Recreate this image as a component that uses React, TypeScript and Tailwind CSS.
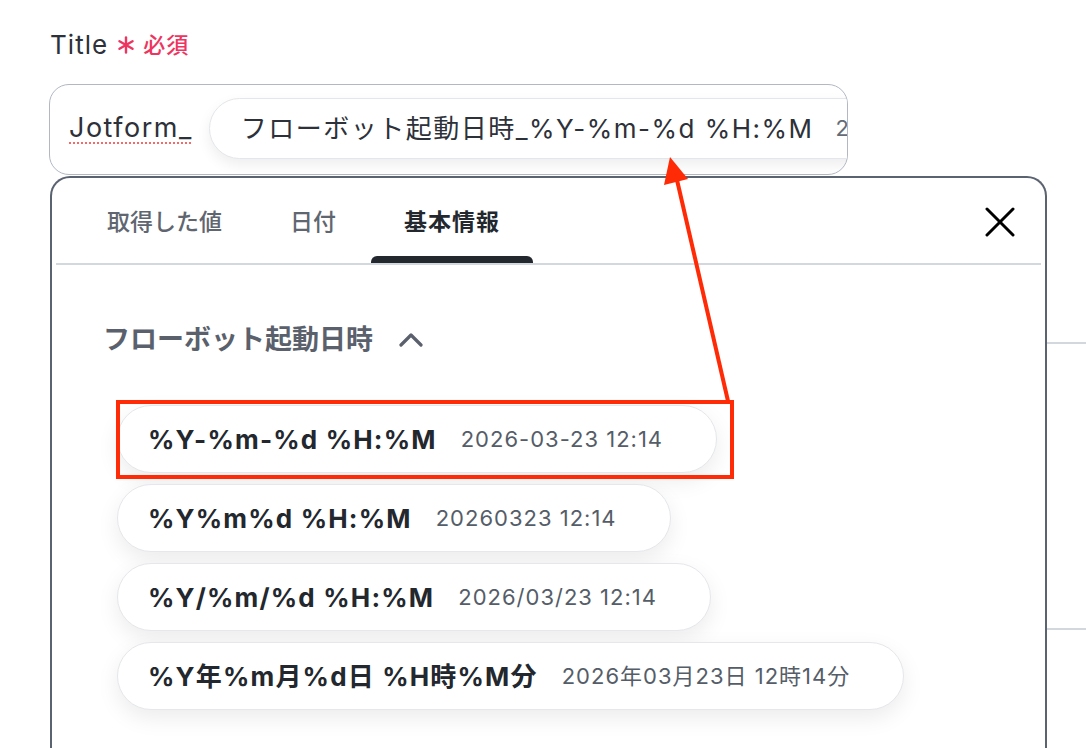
import React from 'react'

const formats = [
  { pattern: '%Y-%m-%d %H:%M', sample: '2026-03-23 12:14' },
  { pattern: '%Y%m%d %H:%M', sample: '20260323 12:14' },
  { pattern: '%Y/%m/%d %H:%M', sample: '2026/03/23 12:14' },
  { pattern: '%Y年%m月%d日 %H時%M分', sample: '2026年03月23日 12時14分' },
]

const tabs = ['取得した値', '日付', '基本情報']

function Asterisk() {
  return (
    <svg width="16" height="18" viewBox="0 0 16 18" className="ml-[10px] mr-[9px]">
      <g stroke="#ee3460" strokeWidth="2.4" strokeLinecap="round">
        <line x1="8" y1="1.5" x2="8" y2="16.5" />
        <line x1="1.5" y1="5.2" x2="14.5" y2="12.8" />
        <line x1="1.5" y1="12.8" x2="14.5" y2="5.2" />
      </g>
    </svg>
  )
}

export default function App() {
  const active = 2

  return (
    <div
      className="relative w-[1086px] h-[748px] overflow-hidden bg-white"
      style={{ fontFamily: 'Inter, "Noto Sans CJK JP", sans-serif' }}
    >
      <div className="pt-[28px]">
        {/* label */}
        <div className="flex items-center pl-[50px] h-[34px]">
          <span className="text-[26px] leading-none text-[#2d3139] tracking-[0.04em]">Title</span>
          <Asterisk />
          <span className="text-[22px] leading-none font-medium text-[#ee3460] tracking-[1px]">必須</span>
        </div>

        {/* input */}
        <div className="ml-[49px] mt-[22px] w-[799px] h-[91px] rounded-[20px] border-[1.5px] border-[#b1b8c3] overflow-hidden flex items-center pl-[19px] pb-[3px]">
          <span className="text-[27px] tracking-[1.5px] text-[#2d3139] underline decoration-dotted decoration-[#f26b6b] decoration-2 underline-offset-[6px] shrink-0">
            Jotform_
          </span>
          <div className="ml-[16px] h-[61px] shrink-0 rounded-full border border-[#e3e6ea] bg-white shadow-[0_6px_14px_rgba(0,0,0,0.07)] flex items-center pl-[31px] pr-[30px] gap-[22px] whitespace-nowrap">
            <span className="text-[26px] tracking-[1.5px] text-[#2d3139]">フローボット起動日時_%Y-%m-%d %H:%M</span>
            <span className="text-[22px] tracking-[1px] text-[#656c77]">2026-03-23 12:14</span>
          </div>
        </div>

        <div className="flex mt-[1px]">
          {/* panel */}
          <div className="ml-[50px] w-[997px] h-[620px] shrink-0 rounded-t-[20px] border-2 border-b-0 border-[#5b6370] bg-white">
            <div className="mx-[4px] flex items-end justify-between border-b-2 border-[#d3d7de] h-[87px]">
              <div className="flex pl-[18px] gap-[2px]">
                {tabs.map((t, i) => (
                  <div key={t} className="flex flex-col items-center">
                    <span
                      className={`px-[33px] text-[23px] leading-none ${
                        i === active ? 'text-[#23272e] font-semibold tracking-[1px]' : 'text-[#5f6670] font-medium'
                      }`}
                    >
                      {t}
                    </span>
                    <span
                      className={`mt-[22px] h-[7px] w-full rounded-t-[6px] ${i === active ? 'bg-[#23272e]' : 'bg-transparent'}`}
                    />
                  </div>
                ))}
              </div>
              <button className="mb-[26px] mr-[26px]">
                <svg width="30" height="30" viewBox="0 0 30 30">
                  <g stroke="#000" strokeWidth="3" strokeLinecap="round">
                    <line x1="2" y1="2" x2="28" y2="28" />
                    <line x1="28" y1="2" x2="2" y2="28" />
                  </g>
                </svg>
              </button>
            </div>

            <div className="pl-[51px] pt-[57px] flex items-center">
              <span className="text-[27px] leading-[36px] font-semibold text-[#5a616c]">フローボット起動日時</span>
              <svg width="24" height="14" viewBox="0 0 24 14" className="ml-[26px]">
                <polyline points="2,12 12,2 22,12" fill="none" stroke="#5a616c" strokeWidth="3.2" strokeLinecap="round" strokeLinejoin="round" />
              </svg>
            </div>

            <div className="ml-[65px] mt-[47px] flex flex-col items-start gap-[11px]">
              {formats.map(f => (
                <div
                  key={f.pattern}
                  className="h-[68px] rounded-full border border-[#e5e7eb] bg-white shadow-[0_8px_22px_rgba(0,0,0,0.08)] flex items-center pl-[30px] pr-[53px] gap-[24px] whitespace-nowrap"
                >
                  <span className="text-[26px] tracking-[0.045em] font-bold text-[#23272e]">{f.pattern}</span>
                  <span className="text-[22px] tracking-[1px] text-[#555d68]">{f.sample}</span>
                </div>
              ))}
            </div>
          </div>

          {/* background rows to the right */}
          <div className="flex-1">
            <div className="mt-[166px] h-[2px] bg-[#d3d7de]" />
            <div className="mt-[284px] h-[2px] bg-[#d3d7de]" />
          </div>
        </div>
      </div>

      {/* annotation */}
      <div className="absolute left-[116px] top-[400px] w-[618px] h-[79px] border-4 border-[#ff2b06]" />
      <svg className="absolute left-0 top-0" width="1086" height="748" viewBox="0 0 1086 748">
        <line x1="728" y1="401" x2="677" y2="180" stroke="#ff2b06" strokeWidth="4" />
        <polygon points="670,157 664,185 688,179" fill="#ff2b06" />
      </svg>
    </div>
  )
}
